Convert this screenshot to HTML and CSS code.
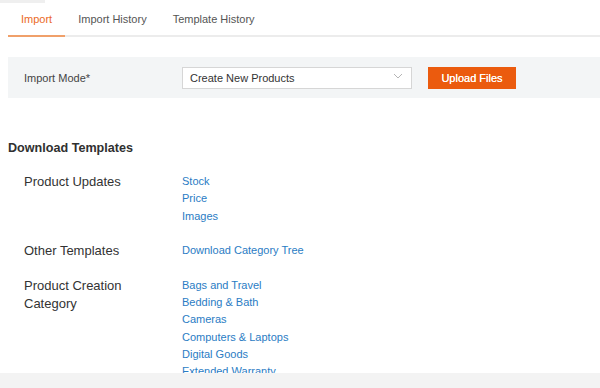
FILE: index.html
```html
<!DOCTYPE html>
<html lang="en">
<head>
  <meta charset="UTF-8" />
  <meta name="viewport" content="width=device-width, initial-scale=1.0"/>
  <title>Import | Seller Center</title>
  <link rel="stylesheet" href="styles.css">
</head>
<body>

  <div class="page">
    <div class="top-stub"></div>

    <div class="tabs">
      <a href="#" class="tab active">Import</a>
      <a href="#" class="tab">Import History</a>
      <a href="#" class="tab">Template History</a>
    </div>

    <div class="mode-bar">
      <label class="mode-label">Import Mode*</label>
      <div class="select">
        <span>Create New Products</span>
        <svg class="chevron" width="10" height="6" viewBox="0 0 10 6">
          <path d="M1 1 L5 5 L9 1" fill="none" stroke="#b5b5b5" stroke-width="1"/>
        </svg>
      </div>
      <button class="upload-btn">Upload Files</button>
    </div>

    <h3 class="section-title">Download Templates</h3>

    <div class="tpl-row">
      <div class="tpl-label">Product Updates</div>
      <div class="tpl-links">
        <a href="#">Stock</a>
        <a href="#">Price</a>
        <a href="#">Images</a>
      </div>
    </div>

    <div class="tpl-row">
      <div class="tpl-label">Other Templates</div>
      <div class="tpl-links">
        <a href="#">Download Category Tree</a>
      </div>
    </div>

    <div class="tpl-row">
      <div class="tpl-label">Product Creation<br>Category</div>
      <div class="tpl-links">
        <a href="#">Bags and Travel</a>
        <a href="#">Bedding &amp; Bath</a>
        <a href="#">Cameras</a>
        <a href="#">Computers &amp; Laptops</a>
        <a href="#">Digital Goods</a>
        <a href="#">Extended Warranty</a>
      </div>
    </div>
  </div>

  <div class="bottom-band"></div>

</body>
</html>
```

FILE: styles.css
```css
* {
  box-sizing: border-box;
  margin: 0;
  padding: 0;
}

body {
  font-family: "Liberation Sans", Arial, sans-serif;
  color: #333;
  background: #fff;
  height: 388px;
  display: flex;
  flex-direction: column;
  overflow: hidden;
}

.page {
  height: 373px;
  overflow: hidden;
  padding-left: 8px;
}

.top-stub {
  width: 45px;
  height: 3px;
  margin-left: -8px;
  background: #efefef;
}

.tabs {
  display: flex;
  border-bottom: 2px solid #ececec;
}

.tab {
  display: block;
  padding: 9px 13px;
  font-size: 11px;
  line-height: 14px;
  color: #555;
  text-decoration: none;
  border-bottom: 2px solid transparent;
  margin-bottom: -2px;
}

.tab.active {
  color: #eb6a1f;
  border-bottom-color: #f0a06a;
}

.mode-bar {
  margin-top: 20px;
  height: 41px;
  background: #f3f5f6;
  display: flex;
  align-items: center;
  padding-left: 16px;
}

.mode-label {
  width: 158px;
  font-size: 11px;
  color: #444;
}

.select {
  width: 230px;
  height: 22px;
  background: #fff;
  border: 1px solid #d6d6d6;
  display: flex;
  align-items: center;
  justify-content: space-between;
  padding: 0 8px 0 7px;
  font-size: 11px;
  color: #333;
}

.chevron {
  margin-top: -3px;
}

.upload-btn {
  margin-left: 16px;
  width: 88px;
  height: 22px;
  background: #eb5b0e;
  color: #fff;
  border: none;
  font-family: inherit;
  font-size: 11px;
  text-shadow: 0 0 0.4px #fff;
}

.section-title {
  margin-top: 42px;
  font-size: 12.6px;
  line-height: 16px;
  font-weight: bold;
  color: #303030;
}

.tpl-row {
  display: flex;
  padding-left: 16px;
  margin-top: 17px;
}

.tpl-row:first-of-type {
  margin-top: 25px;
}

.tpl-label {
  width: 158px;
  font-size: 13px;
  line-height: 18px;
  color: #333;
}

.tpl-links {
  display: flex;
  flex-direction: column;
}

.tpl-links a {
  font-size: 11px;
  line-height: 17.3px;
  color: #2a7cc4;
  text-decoration: none;
}

.bottom-band {
  flex: 1;
  background: #f3f3f3;
}
```
